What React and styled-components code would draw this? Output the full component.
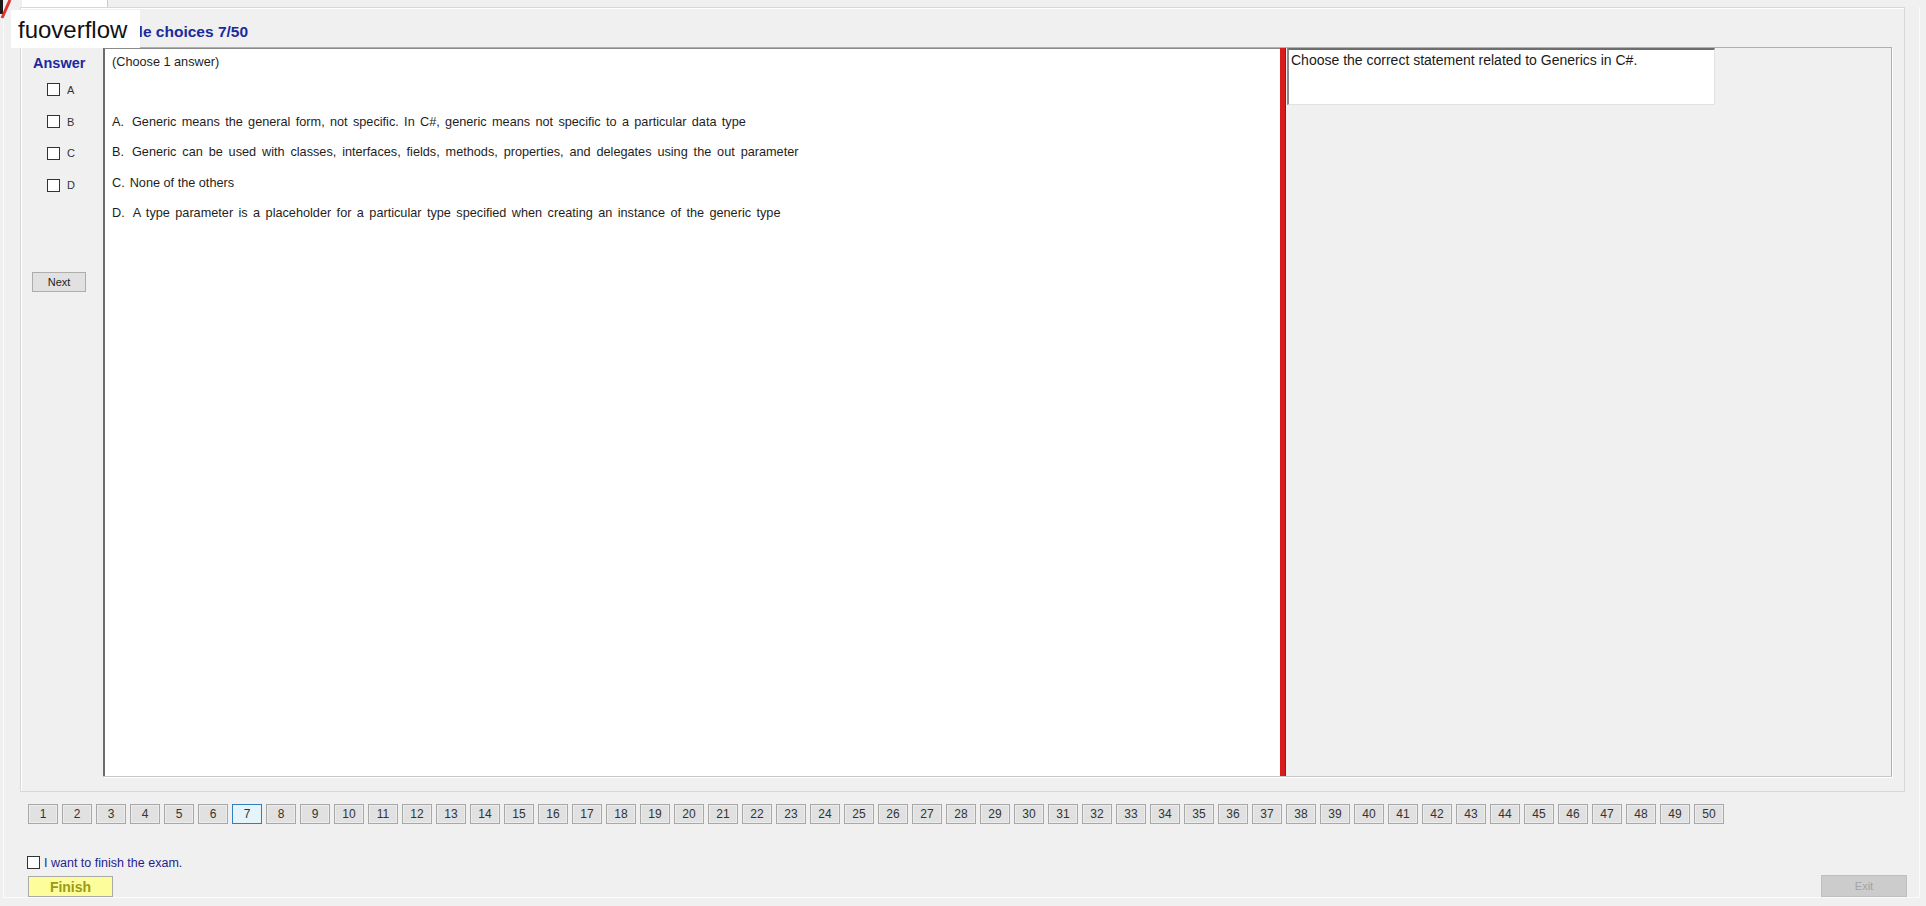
import styled, { createGlobalStyle, css } from "styled-components";

const GlobalStyle = createGlobalStyle`
  html, body {
    margin: 0;
    padding: 0;
    background: #f0f0f0;
  }
  * {
    box-sizing: border-box;
  }
`;

const options = [
  {
    key: "A.",
    text: "Generic means the general form, not specific. In C#, generic means not specific to a particular data type",
    spread: 1.8,
    gap: 8,
  },
  {
    key: "B.",
    text: "Generic can be used with classes, interfaces, fields, methods, properties, and delegates using the out parameter",
    spread: 2.35,
    gap: 8,
  },
  { key: "C.", text: "None of the others", spread: 0, gap: 5 },
  {
    key: "D.",
    text: "A type parameter is a placeholder for a particular type specified when creating an instance of the generic type",
    spread: 1.9,
    gap: 8,
  },
];

const pages = Array.from({ length: 50 }, (_, i) => i + 1);

const App = () => {
  return (
    <>
      <GlobalStyle />
      <Screen>
        <CornerMark width="12" height="20" viewBox="0 0 12 20">
          <rect x="0" y="0" width="3" height="14" fill="#1a1a1a" />
          <line x1="2" y1="18" x2="10" y2="0" stroke="#e0332f" strokeWidth="3" />
        </CornerMark>
        <Brand>fuoverflow</Brand>

        <TabStrip>
          <Tab />
        </TabStrip>

        <Frame>
          <GroupBox>
            <TitleRow>
              <Title>Multiple choices 7/50</Title>
            </TitleRow>
            <Body>
              <AnswerColumn>
                <AnswerTitle>Answer</AnswerTitle>
                <AnswerList>
                  {["A", "B", "C", "D"].map((l) => (
                    <AnswerRow key={l}>
                      <Box />
                      <AnswerLetter>{l}</AnswerLetter>
                    </AnswerRow>
                  ))}
                </AnswerList>
                <NextButton>Next</NextButton>
              </AnswerColumn>

              <Inner>
                <ContentPanel>
                  <Hint>(Choose 1 answer)</Hint>
                  <OptionList>
                    {options.map((o) => (
                      <Option key={o.key} $spread={o.spread}>
                        <OptionKey $gap={o.gap}>{o.key}</OptionKey>
                        {o.text}
                      </Option>
                    ))}
                  </OptionList>
                </ContentPanel>
                <RedBar />
                <QuestionSide>
                  <QuestionBox>
                    Choose the correct statement related to Generics in C#.
                  </QuestionBox>
                </QuestionSide>
              </Inner>
            </Body>
          </GroupBox>

          <Pager>
            {pages.map((p) => (
              <PageButton key={p} $active={p === 7}>
                {p}
              </PageButton>
            ))}
          </Pager>

          <FinishCheck>
            <Box />
            <FinishLabel>I want to finish the exam.</FinishLabel>
          </FinishCheck>

          <BottomRow>
            <FinishButton>Finish</FinishButton>
            <ExitButton disabled>Exit</ExitButton>
          </BottomRow>
        </Frame>
      </Screen>
    </>
  );
};

const Screen = styled.div`
  position: relative;
  width: 1926px;
  height: 906px;
  overflow: hidden;
  background: #f0f0f0;
  font-family: "Liberation Sans", Arial, sans-serif;
  color: #1e1e1e;
`;

const CornerMark = styled.svg`
  position: absolute;
  left: 0;
  top: 0;
  z-index: 3;
`;

const Brand = styled.div`
  position: absolute;
  left: 11px;
  top: 10px;
  width: 129px;
  height: 38px;
  padding: 2px 0 0 7px;
  background: #ffffff;
  font-size: 24px;
  line-height: 36px;
  color: #111;
  z-index: 2;
`;

const TabStrip = styled.div`
  height: 7px;
  display: flex;
`;

const Tab = styled.div`
  margin-left: 22px;
  width: 86px;
  height: 7px;
  background: #ffffff;
  border-right: 1px solid #c9c9c9;
`;

const Frame = styled.div`
  margin-left: 3px;
  width: 1917px;
  height: 891px;
  border-left: 1px solid #fbfbfb;
  border-right: 1px solid #fbfbfb;
  border-bottom: 1px solid #fbfbfb;
  display: flex;
  flex-direction: column;
`;

const GroupBox = styled.div`
  margin-left: 16px;
  width: 1885px;
  height: 786px;
  border: 1px solid #d8d8d8;
  box-shadow: inset 1px 1px 0 #ffffff;
  display: flex;
  flex-direction: column;
`;

const TitleRow = styled.div`
  height: 39px;
  padding: 16px 0 0 72px;
`;

const Title = styled.div`
  font-size: 15.5px;
  line-height: 16px;
  font-weight: bold;
  color: #1b2a9e;
`;

const Body = styled.div`
  height: 730px;
  display: flex;
`;

const AnswerColumn = styled.div`
  width: 82px;
  padding-top: 8px;
  display: flex;
  flex-direction: column;
`;

const AnswerTitle = styled.div`
  padding-left: 12px;
  font-size: 14.5px;
  line-height: 16px;
  font-weight: bold;
  color: #1b2a9e;
`;

const AnswerList = styled.div`
  margin-top: 3px;
  display: flex;
  flex-direction: column;
`;

const AnswerRow = styled.div`
  height: 31.8px;
  padding-left: 26px;
  display: flex;
  align-items: center;
  gap: 7px;
`;

const Box = styled.span`
  display: inline-block;
  width: 13px;
  height: 13px;
  background: #ffffff;
  border: 1px solid #333333;
  flex-shrink: 0;
`;

const AnswerLetter = styled.span`
  font-size: 11px;
  color: #333;
`;

const NextButton = styled.button`
  margin: 71px 0 0 11px;
  width: 54px;
  height: 20px;
  padding: 0;
  background: #e1e1e1;
  border: 1px solid #adadad;
  font-family: inherit;
  font-size: 11px;
  color: #222;
`;

const Inner = styled.div`
  flex: 1;
  margin-right: 12px;
  display: flex;
  border-top: 1px solid #b0b0b0;
  border-right: 1px solid #b0b0b0;
  border-bottom: 1px solid #c8c8c8;
  box-shadow: 1px 1px 0 #ffffff;
`;

const ContentPanel = styled.div`
  width: 1177px;
  background: #ffffff;
  border-left: 2px solid #6b6b6b;
  border-top: 1px solid #8a8a8a;
  padding: 5px 0 0 7px;
  font-size: 12.7px;
  color: #1e1e1e;
`;

const Hint = styled.div`
  line-height: 16px;
`;

const OptionList = styled.div`
  margin-top: 37px;
  display: flex;
  flex-direction: column;
`;

const Option = styled.div`
  height: 30.3px;
  line-height: 30.3px;
  white-space: nowrap;
  ${({ $spread }) =>
    $spread &&
    css`
      word-spacing: ${$spread}px;
    `}
`;

const OptionKey = styled.span`
  display: inline-block;
  margin-right: ${({ $gap }) => $gap}px;
  word-spacing: 0;
`;

const RedBar = styled.div`
  width: 6px;
  background: #d81b1b;
  border-right: 1px solid #6e2a2a;
`;

const QuestionSide = styled.div`
  flex: 1;
  padding-left: 1px;
  background: #f0f0f0;
`;

const QuestionBox = styled.div`
  width: 428px;
  height: 57px;
  background: #ffffff;
  border-top: 2px solid #6e6e6e;
  border-left: 2px solid #8c8c8c;
  border-right: 1px solid #e2e2e2;
  border-bottom: 1px solid #e2e2e2;
  padding: 2px 0 0 2px;
  font-size: 14px;
  line-height: 16px;
  color: #1a1a1a;
`;

const Pager = styled.div`
  margin: 12px 0 0 24px;
  display: flex;
  gap: 4px;
`;

const PageButton = styled.button`
  width: 30px;
  height: 20px;
  padding: 0;
  background: #e1e1e1;
  border: 1px solid #a8a8a8;
  box-shadow: inset 0 0 0 1px #ececec;
  font-family: inherit;
  font-size: 12px;
  color: #333;
  ${({ $active }) =>
    $active &&
    css`
      background: #e5f3fb;
      border-color: #2f7fc0;
      box-shadow: none;
    `}
`;

const FinishCheck = styled.div`
  margin: 32px 0 0 23px;
  height: 13px;
  display: flex;
  align-items: center;
  gap: 4px;
`;

const FinishLabel = styled.span`
  font-size: 12.5px;
  color: #1f1f8f;
`;

const BottomRow = styled.div`
  margin: 6px 12px 0 24px;
  display: flex;
  justify-content: space-between;
  align-items: flex-end;
`;

const FinishButton = styled.button`
  width: 85px;
  height: 21px;
  padding: 0;
  background: #fdfd9c;
  border: 1px solid #a9a9a9;
  font-family: inherit;
  font-size: 14px;
  font-weight: bold;
  color: #9a9a14;
`;

const ExitButton = styled.button`
  width: 86px;
  height: 22px;
  padding: 0;
  background: #cccccc;
  border: 1px solid #bfbfbf;
  font-family: inherit;
  font-size: 11px;
  color: #a3a3a3;
`;

export default App;
